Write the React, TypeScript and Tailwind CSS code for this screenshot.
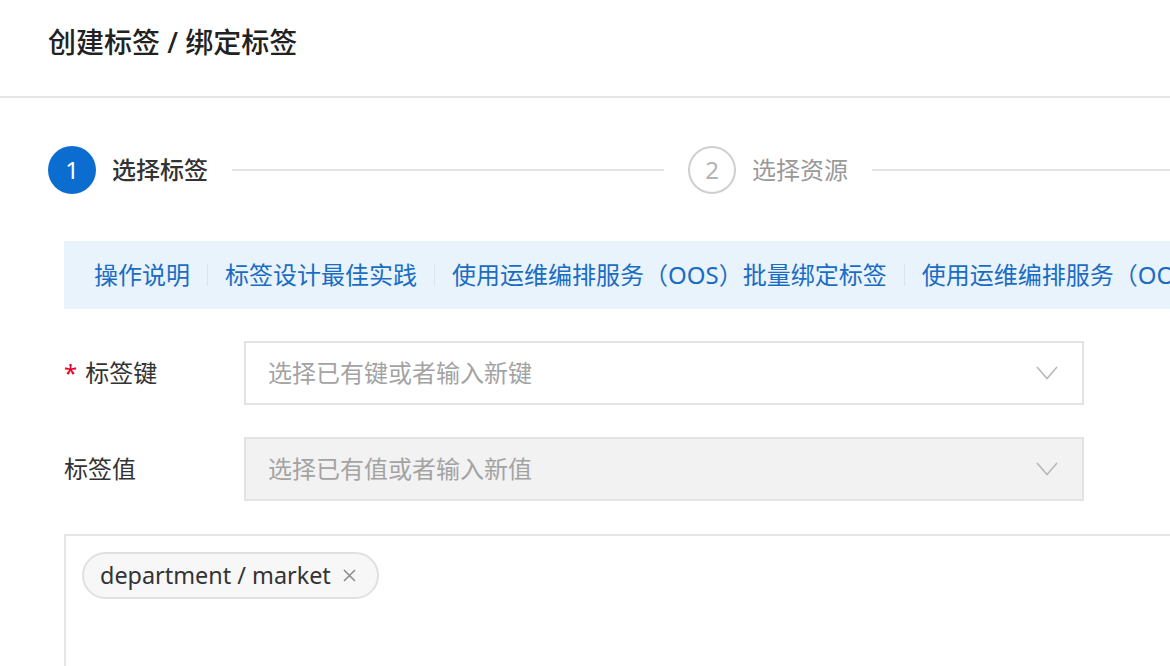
import { Fragment } from "react";

const links = [
  "操作说明",
  "标签设计最佳实践",
  "使用运维编排服务（OOS）批量绑定标签",
  "使用运维编排服务（OOS）批量解绑标签",
];

function Chevron() {
  return (
    <svg width="22" height="14" viewBox="0 0 22 14" fill="none" className="shrink-0">
      <polyline points="1,1 11,12.5 21,1" stroke="#b8b8b8" strokeWidth="1.6" />
    </svg>
  );
}

function SelectBox({ placeholder, disabled }: { placeholder: string; disabled?: boolean }) {
  return (
    <div
      className={
        "w-[840px] h-[64px] border-2 border-[#e3e3e3] flex items-center justify-between pl-[22px] pr-[24px] " +
        (disabled ? "bg-[#f2f2f2]" : "bg-white")
      }
    >
      <span className="text-[24px] text-[#a3a3a3]">{placeholder}</span>
      <Chevron />
    </div>
  );
}

export default function App() {
  return (
    <div className="w-[1170px] h-[666px] overflow-hidden bg-white text-[#333] [font-family:'Noto_Sans','Noto_Sans_CJK_SC',sans-serif]">
      {/* header */}
      <div className="h-[98px] border-b-2 border-[#e6e6e6] flex items-center px-12 pb-3">
        <h1 className="text-[28px] font-medium text-[#222] leading-none">创建标签 / 绑定标签</h1>
      </div>

      {/* steps */}
      <div className="flex items-center pl-12 pt-12 w-[1400px]">
        <div className="w-12 h-12 rounded-full bg-[#0c6dd0] flex items-center justify-center text-white text-[24px] shrink-0">
          1
        </div>
        <span className="ml-4 text-[24px] font-medium text-[#333] whitespace-nowrap">选择标签</span>
        <div className="mx-6 h-[2px] w-[432px] bg-[#e3e3e3]" />
        <div className="w-12 h-12 rounded-full border-2 border-[#cfcfcf] flex items-center justify-center text-[#b3b3b3] text-[24px] shrink-0">
          2
        </div>
        <span className="ml-4 text-[24px] text-[#999] whitespace-nowrap">选择资源</span>
        <div className="ml-6 h-[2px] w-[400px] bg-[#e3e3e3]" />
      </div>

      {/* help links */}
      <div className="ml-16 mt-[47px] w-[1300px] h-[68px] bg-[#e9f3fc] flex items-center pl-[30px] whitespace-nowrap">
        {links.map((l, i) => (
          <Fragment key={l}>
            {i > 0 && <span className="mx-[17px] w-[1px] h-[22px] bg-[#dbe3ec]" />}
            <span className="text-[24px] text-[#1b6cc3]">{l}</span>
          </Fragment>
        ))}
      </div>

      {/* form */}
      <div className="pl-16 mt-8 flex flex-col gap-8">
        <div className="flex items-center">
          <label className="w-[180px] text-[24px] text-[#333] flex items-center">
            <span className="text-[#e5002d] mr-2">*</span>标签键
          </label>
          <SelectBox placeholder="选择已有键或者输入新键" />
        </div>
        <div className="flex items-center">
          <label className="w-[180px] text-[24px] text-[#333]">标签值</label>
          <SelectBox placeholder="选择已有值或者输入新值" disabled />
        </div>
      </div>

      {/* selected tags */}
      <div className="ml-16 mt-[33px] w-[1200px] h-[200px] border-2 border-[#e6e6e6] pl-4 pt-4">
        <div className="inline-flex items-center h-[47px] rounded-full border-2 border-[#e0e0e0] bg-[#f7f7f7] pl-4 pr-[21px]">
          <span className="text-[23.4px] text-[#333]">department / market</span>
          <svg width="13" height="13" viewBox="0 0 13 13" className="ml-3">
            <path d="M1 1L12 12M12 1L1 12" stroke="#8a8a8a" strokeWidth="1.5" />
          </svg>
        </div>
      </div>
    </div>
  );
}
